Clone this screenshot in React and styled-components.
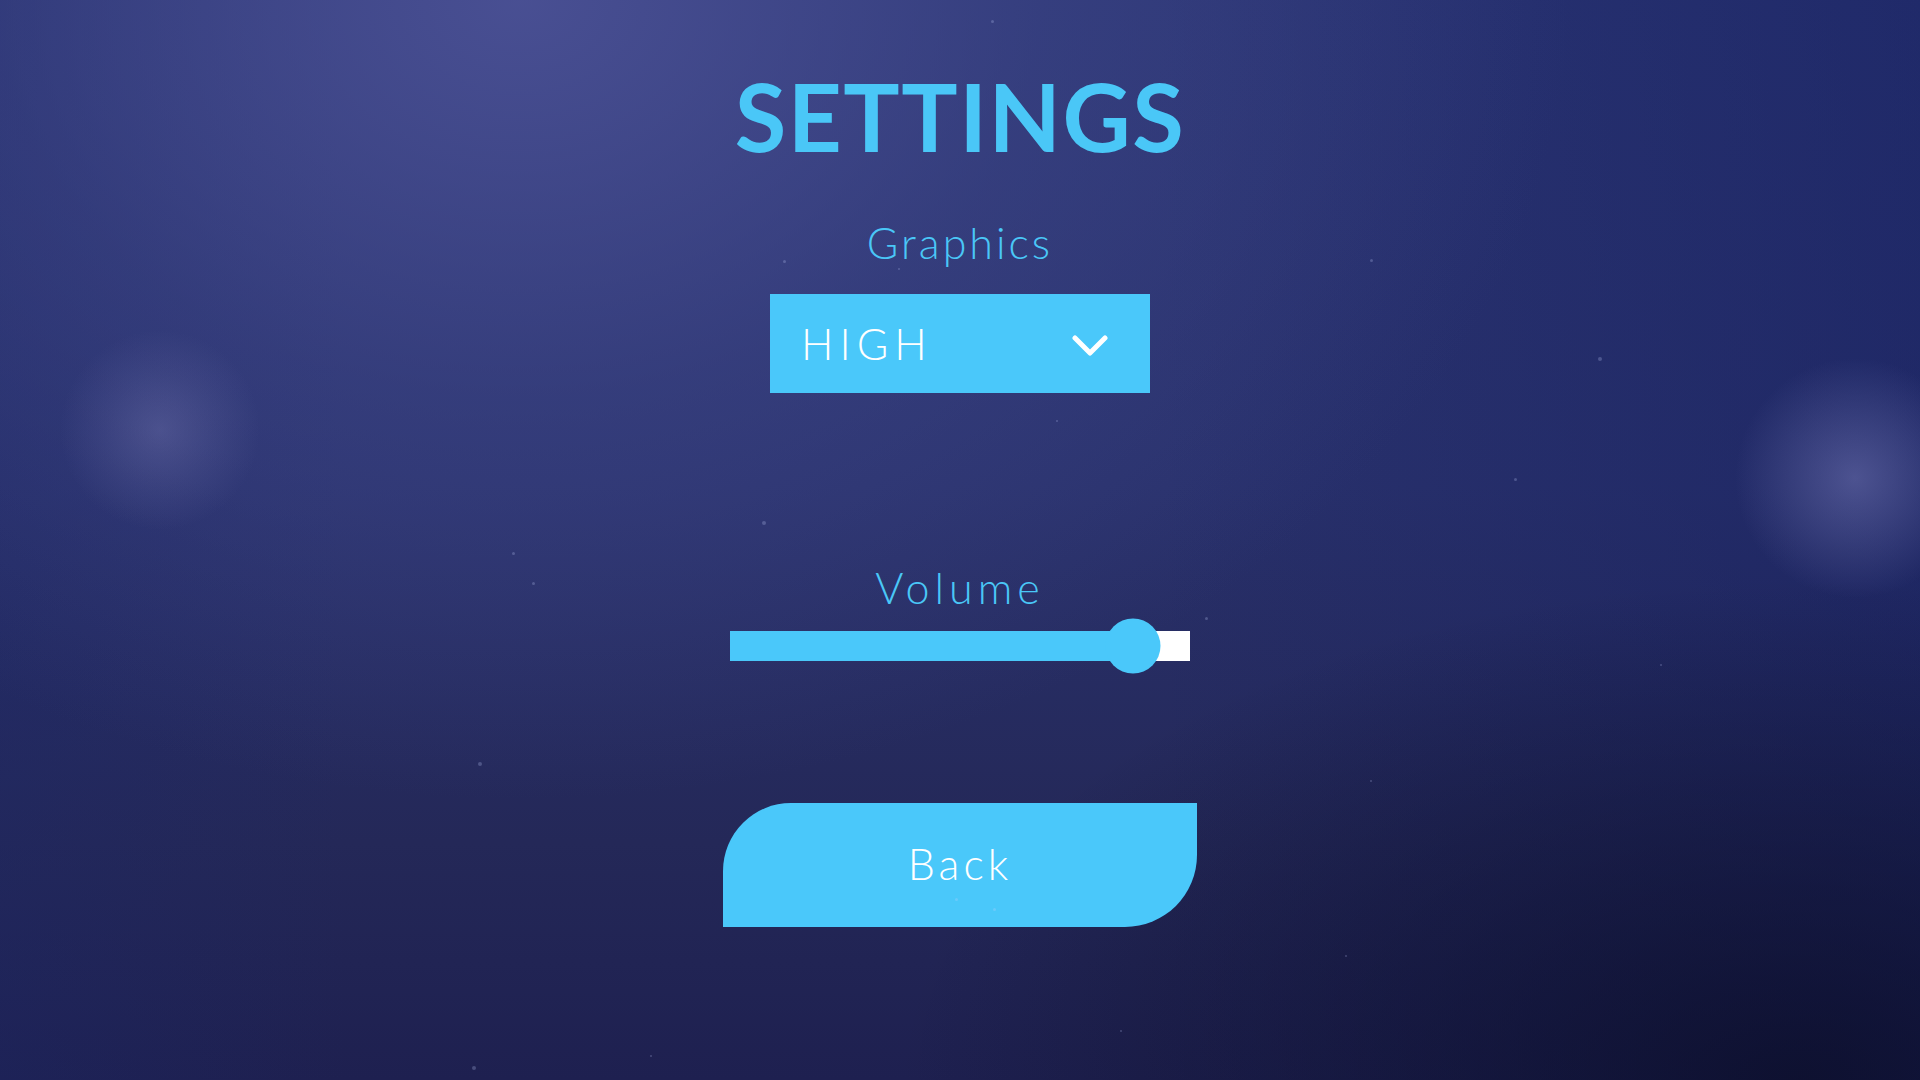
import React, { useState } from 'react';
import styled, { createGlobalStyle } from 'styled-components';

const GlobalStyle = createGlobalStyle`
    html, body {
        margin: 0;
        padding: 0;
        height: 100%;
    }
    body {
        font-family: "Lato", "Liberation Sans", sans-serif;
        overflow: hidden;
    }
`;

const Page = styled.div`
    position: relative;
    width: 100%;
    height: 100vh;
    display: flex;
    flex-direction: column;
    align-items: center;
    overflow: hidden;
    background:
        radial-gradient(circle at 160px 430px, rgba(120, 122, 180, 0.38) 0px, rgba(120, 122, 180, 0.16) 55px, transparent 100px),
        radial-gradient(circle at 1855px 478px, rgba(125, 128, 190, 0.48) 0px, rgba(125, 128, 190, 0.2) 70px, transparent 120px),
        radial-gradient(ellipse 1050px 800px at 520px 0px, rgba(76, 82, 150, 0.9), rgba(66, 74, 140, 0.45) 50%, transparent 100%),
        radial-gradient(ellipse 900px 500px at 1800px 1080px, rgba(10, 12, 36, 0.75), transparent 100%),
        linear-gradient(90deg, rgba(28, 38, 100, 0.35) 0%, transparent 18%, transparent 60%, rgba(20, 30, 95, 0.45) 100%),
        linear-gradient(180deg, #2a3473 0%, #29316c 45%, #242858 78%, #1e2050 100%);
`;

const Speck = styled.span`
    position: absolute;
    width: ${p => p.$size || 3}px;
    height: ${p => p.$size || 3}px;
    border-radius: 50%;
    background: rgba(200, 210, 255, 0.25);
`;

const Title = styled.h1`
    margin: 69px 0 0;
    font-family: "Lato", sans-serif;
    font-weight: 700;
    font-size: 94px;
    line-height: 94px;
    letter-spacing: 1.5px;
    color: #4ac7f7;
`;

const Label = styled.div`
    margin-top: ${p => p.$gap}px;
    font-family: "Lato", sans-serif;
    font-weight: 300;
    font-size: 43px;
    line-height: 42px;
    letter-spacing: ${p => p.$spacing}px;
    color: #4ac7f7;
`;

const Select = styled.button`
    margin-top: 30px;
    width: 380px;
    height: 99px;
    box-sizing: border-box;
    padding: 0 42px 0 31px;
    display: flex;
    align-items: center;
    justify-content: space-between;
    border: none;
    background: #4ac8fa;
    color: #fff;
    font-family: "Lato", sans-serif;
    font-weight: 300;
    font-size: 43px;
    letter-spacing: 6px;
    cursor: pointer;
`;

const Chevron = styled.svg`
    width: 36px;
    height: 22px;
    margin-top: 4px;
`;

const Track = styled.div`
    position: relative;
    margin-top: 22px;
    width: 460px;
    height: 30px;
    background: #ffffff;
`;

const Fill = styled.div`
    height: 100%;
    background: #4ac8fa;
`;

const Thumb = styled.div`
    position: absolute;
    top: 50%;
    width: 55px;
    height: 55px;
    border-radius: 50%;
    background: #4ac8fa;
    transform: translate(-50%, -50%);
`;

const BackButton = styled.button`
    margin-top: 142px;
    width: 474px;
    height: 124px;
    padding-bottom: 4px;
    border: none;
    border-radius: 68px 0 72px 0;
    background: #4ac8fa;
    color: #fff;
    font-family: "Lato", sans-serif;
    font-weight: 300;
    font-size: 43px;
    letter-spacing: 4px;
    cursor: pointer;
`;

const specks = [
    [991, 20, 3], [783, 260, 3], [898, 268, 2], [1370, 259, 3], [1598, 357, 4],
    [1056, 420, 2], [762, 521, 4], [512, 552, 3], [532, 582, 3], [1514, 478, 3],
    [1205, 617, 3], [478, 762, 4], [1660, 664, 2], [1370, 780, 2], [1345, 955, 2],
    [955, 898, 3], [993, 908, 3], [472, 1066, 4], [650, 1055, 2], [1120, 1030, 2],
];

const App = () => {
    const [volume] = useState(0.876);
    return (
        <Page>
            <GlobalStyle />
            {specks.map(([x, y, s], i) => (
                <Speck key={i} $size={s} style={{ left: x, top: y }} />
            ))}
            <Title>SETTINGS</Title>
            <Label $gap={59} $spacing={3}>Graphics</Label>
            <Select>
                <span>HIGH</span>
                <Chevron viewBox="0 0 36 22">
                    <polyline points="3,3 18,18 33,3" fill="none" stroke="#fff" strokeWidth="5" strokeLinecap="round" strokeLinejoin="round" />
                </Chevron>
            </Select>
            <Label $gap={174} $spacing={5}>Volume</Label>
            <Track>
                <Fill style={{ width: `${volume * 100}%` }} />
                <Thumb style={{ left: `${volume * 100}%` }} />
            </Track>
            <BackButton>Back</BackButton>
        </Page>
    );
};

export default App;
